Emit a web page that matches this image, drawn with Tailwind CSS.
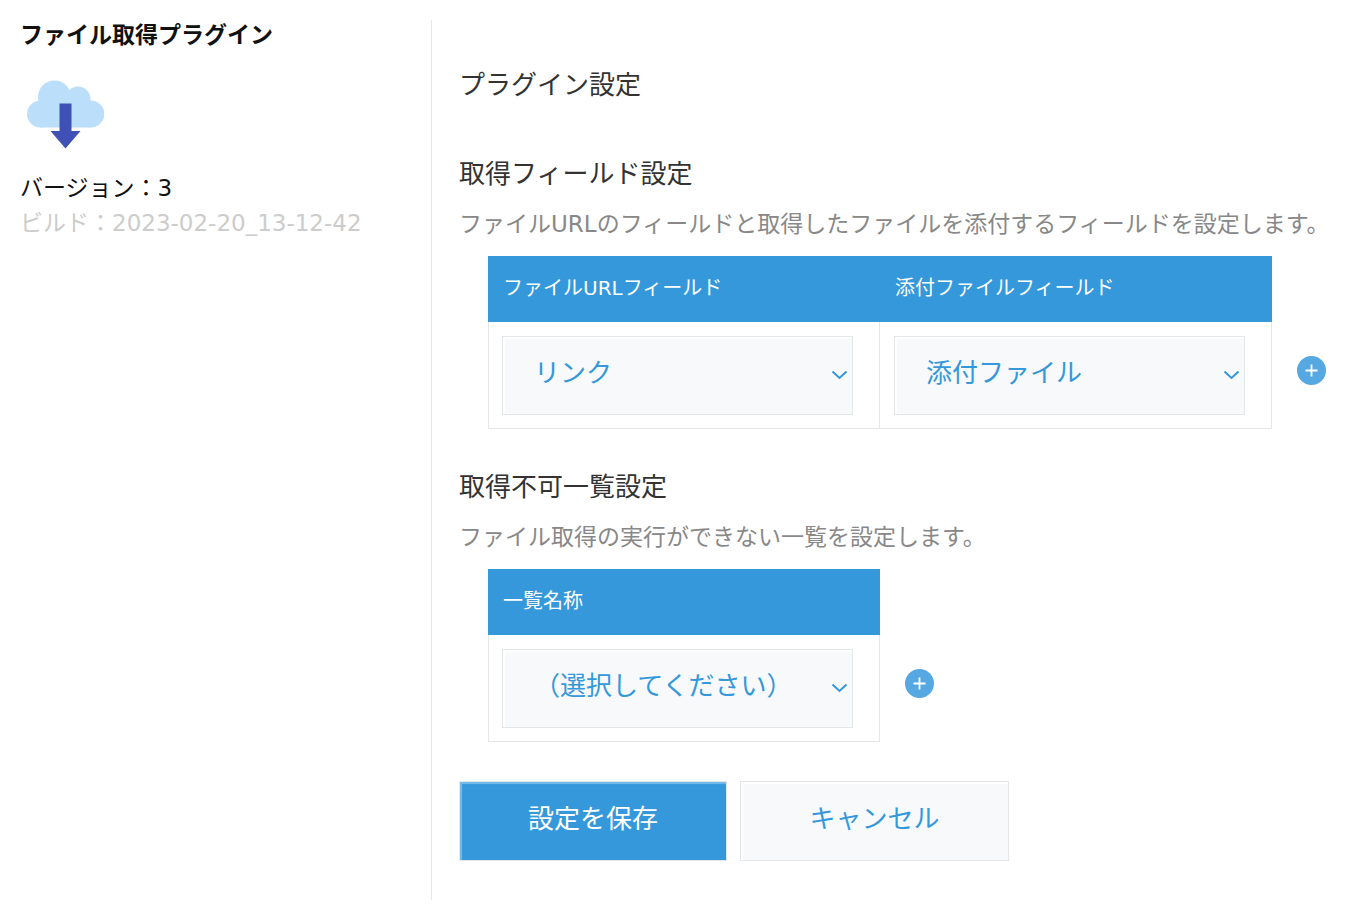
<!DOCTYPE html>
<html lang="ja">
<head>
    <meta charset="UTF-8">
    <meta name="viewport" content="width=device-width,initial-scale=1.0">
    <title>ファイル取得プラグイン</title>
    <script src="https://cdn.jsdelivr.net/npm/@tailwindcss/browser@4"></script>
</head>
<body class="bg-white font-['DejaVu_Sans','Noto_Sans_CJK_JP',sans-serif] text-[#333]">
    <div class="flex min-h-screen pt-5 pb-1.5 pl-5">
        <aside class="w-[412px] shrink-0 border-r border-[#e3e7e8] text-[23px] leading-[35px] text-[#111]">
            <h1 class="font-bold leading-[30px]">ファイル取得プラグイン</h1>
            <svg class="mt-7 ml-1.5 h-[72px] w-20" viewBox="0 0 80 72" aria-hidden="true">
                <g fill="#bbdefb">
                    <circle cx="14.500" cy="36" r="13.500"/>
                    <circle cx="28.500" cy="19" r="16.500"/>
                    <circle cx="52" cy="21" r="12.500"/>
                    <circle cx="64.800" cy="36" r="13.500"/>
                    <path d="M14.500 22.500h50.300v27H14.500z"/>
                </g>
                <path fill="#3f51b5" d="M33.500 25.500h12V53h9L39.500 70.500L24.500 53h9z"/>
            </svg>
            <p class="mt-[21px]">バージョン：3</p>
            <p class="text-[#ccc]">ビルド：2023-02-20_13-12-42</p>
        </aside>

        <main class="flex-1 pl-[27px]">
            <h2 class="mt-[47px] text-[26px] leading-9">プラグイン設定</h2>

            <form>
                <section class="mt-[53px]">
                    <h3 class="text-[26px] leading-9">取得フィールド設定</h3>
                    <p class="mt-[15px] text-[23px] leading-[34px] text-[#888]">ファイルURLのフィールドと取得したファイルを添付するフィールドを設定します。</p>
                    <table class="mt-[15px] ml-[29px] border-separate border-spacing-0">
                        <thead>
                            <tr class="h-[66px] text-left text-[20px] text-white">
                                <th class="w-[392px] bg-[#3498db] pb-0.5 pl-[15px] font-normal"><label for="url-field">ファイルURLフィールド</label></th>
                                <th class="w-[392px] bg-[#3498db] pb-0.5 pl-[15px] font-normal"><label for="file-field">添付ファイルフィールド</label></th>
                                <td></td>
                            </tr>
                        </thead>
                        <tbody>
                            <tr class="align-top">
                                <td class="border-x border-b border-[#e3e7e8] pt-3.5 pb-[13px] pl-[13px]">
                                    <div class="relative w-[351px]">
                                        <select id="url-field" class="block h-[79px] w-full appearance-none border border-[#e3e7e8] bg-[#f7f9fa] pb-1 pl-[31px] text-[26px] text-[#3498db] shadow-[inset_2px_2px_1px_#fff]">
                                            <option>リンク</option>
                                        </select>
                                        <svg class="pointer-events-none absolute top-[34px] right-1.5 h-2.5 w-4" viewBox="0 0 16 10" fill="none" stroke="#3498db" stroke-width="2" aria-hidden="true"><path d="M1.500 1.500L8.500 8L15.500 1.500"/></svg>
                                    </div>
                                </td>
                                <td class="border-r border-b border-[#e3e7e8] pt-3.5 pb-[13px] pl-3.5">
                                    <div class="relative w-[351px]">
                                        <select id="file-field" class="block h-[79px] w-full appearance-none border border-[#e3e7e8] bg-[#f7f9fa] pb-1 pl-[31px] text-[26px] text-[#3498db] shadow-[inset_2px_2px_1px_#fff]">
                                            <option>添付ファイル</option>
                                        </select>
                                        <svg class="pointer-events-none absolute top-[34px] right-1.5 h-2.5 w-4" viewBox="0 0 16 10" fill="none" stroke="#3498db" stroke-width="2" aria-hidden="true"><path d="M1.500 1.500L8.500 8L15.500 1.500"/></svg>
                                    </div>
                                </td>
                                <td class="pt-[34px] pl-[25px]">
                                    <button type="button" aria-label="行を追加" class="block">
                                        <svg class="size-[29px]" viewBox="0 0 29 29" aria-hidden="true"><circle cx="14.500" cy="14.500" r="14.500" fill="#55a8e2"/><path d="M14.500 8.500v12M8.500 14.500h12" stroke="#fff" stroke-width="1.800"/></svg>
                                    </button>
                                </td>
                            </tr>
                        </tbody>
                    </table>
                </section>

                <section class="mt-10">
                    <h3 class="text-[26px] leading-9">取得不可一覧設定</h3>
                    <p class="mt-[15px] text-[23px] leading-[34px] text-[#888]">ファイル取得の実行ができない一覧を設定します。</p>
                    <table class="mt-[15px] ml-[29px] border-separate border-spacing-0">
                        <thead>
                            <tr class="h-[66px] text-left text-[20px] text-white">
                                <th class="w-[392px] bg-[#3498db] pb-0.5 pl-[15px] font-normal"><label for="view-name">一覧名称</label></th>
                                <td></td>
                            </tr>
                        </thead>
                        <tbody>
                            <tr class="align-top">
                                <td class="border-x border-b border-[#e3e7e8] pt-3.5 pb-[13px] pl-[13px]">
                                    <div class="relative w-[351px]">
                                        <select id="view-name" class="block h-[79px] w-full appearance-none border border-[#e3e7e8] bg-[#f7f9fa] pb-1 pl-[31px] text-[26px] text-[#3498db] shadow-[inset_2px_2px_1px_#fff]">
                                            <option>（選択してください）</option>
                                        </select>
                                        <svg class="pointer-events-none absolute top-[34px] right-1.5 h-2.5 w-4" viewBox="0 0 16 10" fill="none" stroke="#3498db" stroke-width="2" aria-hidden="true"><path d="M1.500 1.500L8.500 8L15.500 1.500"/></svg>
                                    </div>
                                </td>
                                <td class="pt-[34px] pl-[25px]">
                                    <button type="button" aria-label="行を追加" class="block">
                                        <svg class="size-[29px]" viewBox="0 0 29 29" aria-hidden="true"><circle cx="14.500" cy="14.500" r="14.500" fill="#55a8e2"/><path d="M14.500 8.500v12M8.500 14.500h12" stroke="#fff" stroke-width="1.800"/></svg>
                                    </button>
                                </td>
                            </tr>
                        </tbody>
                    </table>
                </section>

                <div class="mt-[39px] flex gap-[13px] text-[26px]">
                    <button type="submit" class="h-20 w-[268px] border border-[#e3e7e8] bg-[#3498db] pb-1 text-white shadow-[inset_2px_2px_1px_#75bbea]">設定を保存</button>
                    <button type="button" class="h-20 w-[269px] border border-[#e3e7e8] bg-[#f7f9fa] pb-1 text-[#3498db] shadow-[inset_2px_2px_1px_#fff]">キャンセル</button>
                </div>
            </form>
        </main>
    </div>
</body>
</html>
